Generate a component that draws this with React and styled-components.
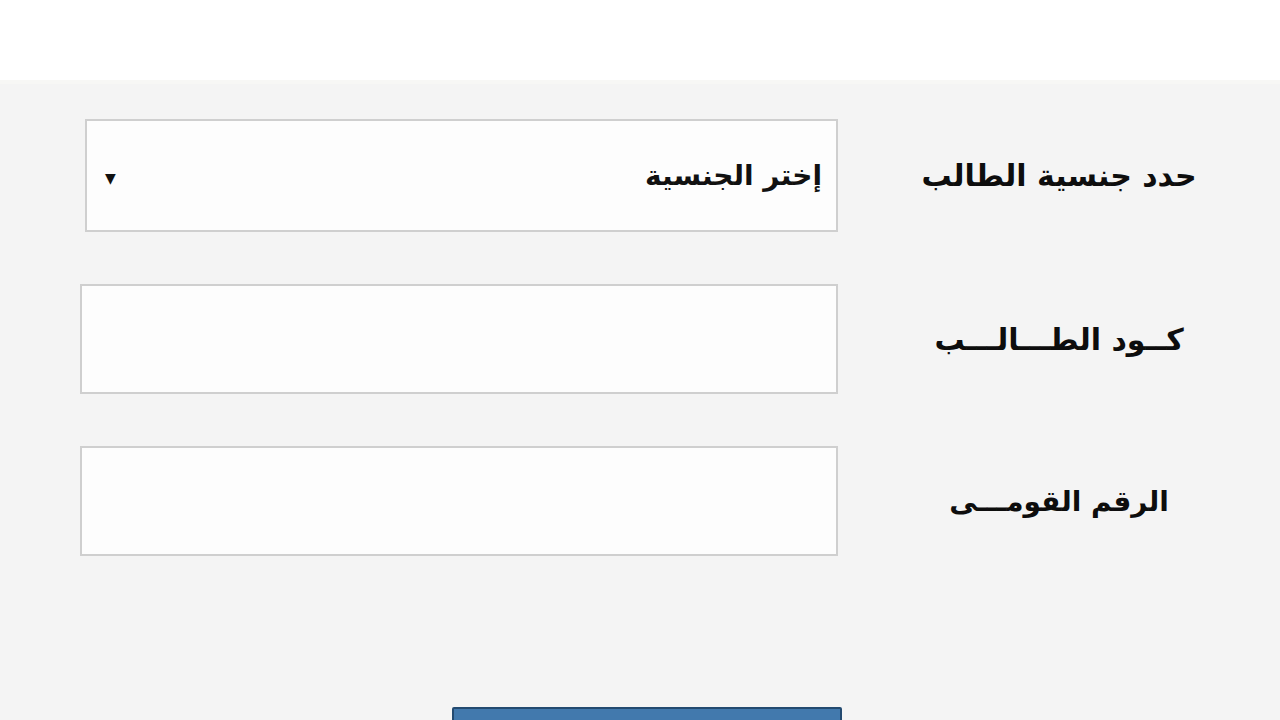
import React from 'react'
import styled, { createGlobalStyle } from 'styled-components'

const GlobalStyle = createGlobalStyle`
    html, body {
        margin: 0;
        padding: 0;
        background: #f4f4f4;
        font-family: "DejaVu Sans", "Liberation Sans", sans-serif;
    }
`

const Header = styled.div`
    height: 80px;
    background: #ffffff;
    border-bottom: 4px solid #f7f7f5;
`

const Page = styled.div`
    direction: rtl;
    height: 636px;
    overflow: hidden;
    background: #f4f4f4;
`

const Form = styled.form`
    display: grid;
    grid-template-columns: 442px 758px;
    row-gap: 52px;
    padding-top: 35px;
`

const Label = styled.label`
    display: flex;
    align-items: center;
    justify-content: center;
    font-size: ${p => p.$size || 30}px;
    font-weight: bold;
    color: #0d0d0d;
`

const Field = styled.div`
    height: ${p => p.$h}px;
    margin-left: ${p => p.$inset || 0}px;
    background: #fdfdfd;
    border: 2px solid #cfcfcf;
    box-sizing: border-box;
    display: flex;
    align-items: center;
    justify-content: space-between;
    padding: 0 14px 0 18px;
`

const Placeholder = styled.span`
    font-size: 28px;
    font-weight: bold;
    color: #111;
`

const Arrow = styled.span`
    font-size: 14px;
    color: #111;
    margin-top: 4px;
`

const Actions = styled.div`
    display: flex;
    justify-content: center;
    padding-top: 151px;
    padding-left: 14px;
`

const Submit = styled.button`
    width: 390px;
    height: 60px;
    background: #4279ad;
    border: 2px solid #234a70;
    border-radius: 2px;
`

export default function App() {
    return (
        <>
            <GlobalStyle />
            <Header />
            <Page>
                <Form>
                    <Label>حدد جنسية الطالب</Label>
                    <Field $h={113} $inset={5}>
                        <Placeholder>إختر الجنسية</Placeholder>
                        <Arrow>▼</Arrow>
                    </Field>
                    <Label>كــود الطـــالـــب</Label>
                    <Field $h={110} />
                    <Label $size={28}>الرقم القومـــى</Label>
                    <Field $h={110} />
                </Form>
                <Actions>
                    <Submit type="button" />
                </Actions>
            </Page>
        </>
    )
}
